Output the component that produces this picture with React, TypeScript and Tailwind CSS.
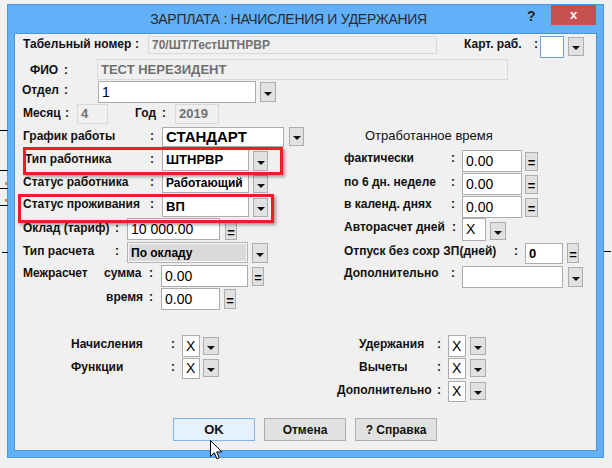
import React from 'react';

const Lbl = ({ children, className = '' }: { children?: React.ReactNode; className?: string }) => (
  <span className={`shrink-0 whitespace-nowrap text-[12px] leading-[14px] font-bold text-[#111] ${className}`}>{children}</span>
);

const Box = ({ children, className = '' }: { children?: React.ReactNode; className?: string }) => (
  <div className={`shrink-0 flex items-center pl-[3px] overflow-hidden whitespace-nowrap ${className}`}>{children}</div>
);

const Drop = ({ className = '' }: { className?: string }) => (
  <div className={`shrink-0 bg-[#e1e1e1] border border-[#adadad] flex items-center justify-center ${className}`}>
    <span className="mt-[3px] w-0 h-0 border-x-[4px] border-x-transparent border-t-[4px] border-t-[#111]" />
  </div>
);

const Eq = ({ className = '' }: { className?: string }) => (
  <div className={`shrink-0 bg-[#e1e1e1] border border-[#adadad] flex items-center justify-center pt-[2px] text-[13px] font-bold leading-none text-black ${className}`}>=</div>
);

const Row = ({ children, className = '' }: { children: React.ReactNode; className?: string }) => (
  <div className={`flex items-start shrink-0 ${className}`}>{children}</div>
);

const white = 'bg-white border border-[#acacac] text-black';
const gray = 'bg-[#f0f0f0] border border-[#d9d9d9] text-[#707070] font-bold';

export default function App() {
  return (
    <div className="relative w-[612px] h-[468px] overflow-hidden bg-[#f0f0f0] pt-[4px] pl-[7px] font-['Liberation_Sans',Arial,sans-serif]">
      {/* bits of the window behind */}
      <div className="absolute left-0 top-[130px] w-[8px] h-px bg-black" />
      <div className="absolute left-0 top-[170px] w-[8px] h-px bg-black" />
      <div className="absolute left-0 top-[188px] w-[8px] h-px bg-black" />
      <div className="absolute left-[5px] top-[182px] w-[2px] h-[3px] bg-[#e08a2a]" />
      <div className="absolute left-0 top-[205px] w-[8px] h-px bg-black" />
      <div className="absolute left-[5px] top-[199px] w-[2px] h-[3px] bg-[#e08a2a]" />
      <div className="absolute left-[2px] top-[252px] w-[6px] h-px bg-black" />
      <div className="absolute left-[604px] top-[251px] w-[7px] h-px bg-black" />

      <div className="w-[597px] h-[454px] border border-[#4f97dc] bg-[#62b0f8] flex flex-col">
        {/* title bar */}
        <div className="h-[28px] flex items-start shrink-0">
          <div className="flex-1 h-full flex items-center justify-center pl-[42px] text-[14px] tracking-[-0.3px] text-[#2b2b2b]">
            ЗАРПЛАТА : НАЧИСЛЕНИЯ И УДЕРЖАНИЯ
          </div>
          <div className="w-[24px] h-full flex items-center justify-start pb-[5px] text-[14px] font-bold text-[#222]">?</div>
          <div className="w-[45px] h-[20px] mr-[7px] bg-[#c75050] flex items-center justify-center text-white text-[13px] font-bold">x</div>
        </div>

        {/* client area */}
        <div className="relative mx-[6px] h-[418px] border border-[#4d94d6] bg-[#f0f0f0] flex flex-col">
          <Row className="h-[25px]">
            <Lbl className="ml-[8px] mt-[3px] w-[112px]">Табельный номер</Lbl>
            <Lbl className="mt-[3px] w-[13px]">:</Lbl>
            <Box className={`mt-[2px] w-[289px] h-[18px] text-[12px] ${gray}`}>70/ШТ/ТестШТНРВР</Box>
            <Lbl className="ml-[27px] mt-[3px] w-[70px]">Карт. раб.</Lbl>
            <Lbl className="mt-[3px] w-[6px]">:</Lbl>
            <Box className="mt-[2px] w-[24px] h-[22px] bg-white border border-[#6ea2dc]" />
            <Drop className="ml-[4px] mt-[3px] w-[16px] h-[19px]" />
          </Row>
          <Row className="h-[22px]">
            <Lbl className="ml-[15px] mt-[4px] w-[34px]">ФИО</Lbl>
            <Lbl className="mt-[4px] w-[33px]">:</Lbl>
            <Box className={`w-[411px] h-[21px] text-[13px] ${gray}`}>ТЕСТ НЕРЕЗИДЕНТ</Box>
          </Row>
          <Row className="h-[23px]">
            <Lbl className="ml-[7px] mt-[2px] w-[42px]">Отдел</Lbl>
            <Lbl className="mt-[2px] w-[34px]">:</Lbl>
            <Box className={`w-[158px] h-[22px] text-[14px] ${white}`}>1</Box>
            <Drop className="ml-[4px] mt-[1px] w-[16px] h-[20px]" />
          </Row>
          <Row className="h-[22px]">
            <Lbl className="ml-[8px] mt-[2px] w-[42px]">Месяц</Lbl>
            <Lbl className="mt-[2px] w-[12px]">:</Lbl>
            <Box className={`w-[31px] h-[20px] text-[13px] ${gray}`}>4</Box>
            <Lbl className="ml-[27px] mt-[2px] w-[27px]">Год</Lbl>
            <Lbl className="mt-[2px] w-[13px]">:</Lbl>
            <Box className={`w-[44px] h-[20px] text-[13px] ${gray}`}>2019</Box>
          </Row>

          {/* middle: settings and worked time */}
          <div className="flex shrink-0">
            <div className="w-[300px] flex flex-col">
              <Row className="h-[23px]">
                <Lbl className="ml-[8px] mt-[3px] w-[127px]">График работы</Lbl>
                <Lbl className="mt-[3px] w-[12px]">:</Lbl>
                <Box className={`mt-[1px] w-[122px] h-[20px] text-[15px] font-bold ${white}`}>СТАНДАРТ</Box>
                <Drop className="ml-[5px] mt-[1px] w-[15px] h-[19px]" />
              </Row>
              <Row className="h-[23px]">
                <Lbl className="ml-[10px] mt-[3px] w-[125px]">Тип работника</Lbl>
                <Lbl className="mt-[3px] w-[12px]">:</Lbl>
                <Box className={`w-[87px] h-[22px] text-[13px] font-bold ${white}`}>ШТНРВР</Box>
                <Drop className="ml-[4px] mt-[2px] w-[15px] h-[20px]" />
              </Row>
              <Row className="h-[23px]">
                <Lbl className="ml-[8px] mt-[3px] w-[127px]">Статус работника</Lbl>
                <Lbl className="mt-[3px] w-[12px]">:</Lbl>
                <Box className={`mt-[1px] w-[87px] h-[20px] text-[12px] font-bold ${white}`}>Работающий</Box>
                <Drop className="ml-[4px] mt-[3px] w-[15px] h-[18px]" />
              </Row>
              <Row className="h-[22px]">
                <Lbl className="ml-[8px] mt-[2px] w-[127px]">Статус проживания</Lbl>
                <Lbl className="mt-[2px] w-[12px]">:</Lbl>
                <Box className={`mt-[1px] w-[87px] h-[21px] text-[13px] font-bold ${white}`}>ВП</Box>
                <Drop className="ml-[4px] mt-[3px] w-[15px] h-[19px]" />
              </Row>
              <Row className="h-[24px]">
                <Lbl className="ml-[8px] mt-[4px] w-[92px]">Оклад (тариф)</Lbl>
                <Lbl className="mt-[4px] w-[12px]">:</Lbl>
                <Box className={`mt-[1px] w-[93px] h-[22px] text-[14px] ${white}`}>10 000.00</Box>
                <Eq className="ml-[5px] mt-[5px] w-[12px] h-[18px]" />
              </Row>
              <Row className="h-[23px]">
                <Lbl className="ml-[8px] mt-[3px] w-[92px]">Тип расчета</Lbl>
                <Lbl className="mt-[3px] w-[12px]">:</Lbl>
                <Box className="mt-[1px] w-[121px] h-[21px] text-[12px] font-bold text-black bg-[#dadada] border border-[#b4b4b4] shadow-[inset_0_0_0_1px_#f6f6f6]">По окладу</Box>
                <Drop className="ml-[4px] mt-[2px] w-[16px] h-[20px]" />
              </Row>
              <Row className="h-[23px]">
                <Lbl className="ml-[8px] mt-[2px] w-[81px]">Межрасчет</Lbl>
                <Lbl className="mt-[2px] w-[45px]">сумма</Lbl>
                <Lbl className="mt-[2px] w-[12px]">:</Lbl>
                <Box className={`mt-[1px] w-[87px] h-[22px] text-[14px] ${white}`}>0.00</Box>
                <Eq className="ml-[4px] mt-[3px] w-[12px] h-[19px]" />
              </Row>
              <Row className="h-[24px]">
                <Lbl className="ml-[91px] mt-[3px] w-[43px]">время</Lbl>
                <Lbl className="mt-[3px] w-[12px]">:</Lbl>
                <Box className={`mt-[1px] w-[59px] h-[22px] text-[14px] ${white}`}>0.00</Box>
                <Eq className="ml-[4px] mt-[2px] w-[12px] h-[20px]" />
              </Row>
            </div>

            <div className="flex-1 flex flex-col">
              <Row className="h-[23px]">
                <span className="ml-[50px] mt-[2px] text-[13px] leading-[15px] text-[#111] whitespace-nowrap">Отработанное время</span>
              </Row>
              <Row className="h-[23px]">
                <Lbl className="ml-[29px] mt-[2px] w-[107px]">фактически</Lbl>
                <Lbl className="mt-[2px] w-[11px]">:</Lbl>
                <Box className={`mt-[1px] w-[60px] h-[22px] text-[14px] ${white}`}>0.00</Box>
                <Eq className="ml-[3px] mt-[3px] w-[13px] h-[19px]" />
              </Row>
              <Row className="h-[23px]">
                <Lbl className="ml-[29px] mt-[3px] w-[107px]">по 6 дн. неделе</Lbl>
                <Lbl className="mt-[3px] w-[11px]">:</Lbl>
                <Box className={`mt-[1px] w-[60px] h-[22px] text-[14px] ${white}`}>0.00</Box>
                <Eq className="ml-[3px] mt-[3px] w-[13px] h-[19px]" />
              </Row>
              <Row className="h-[23px]">
                <Lbl className="ml-[29px] mt-[2px] w-[107px]">в календ. днях</Lbl>
                <Lbl className="mt-[2px] w-[11px]">:</Lbl>
                <Box className={`mt-[1px] w-[60px] h-[22px] text-[14px] ${white}`}>0.00</Box>
                <Eq className="ml-[3px] mt-[3px] w-[13px] h-[19px]" />
              </Row>
              <Row className="h-[24px]">
                <Lbl className="ml-[29px] mt-[2px] w-[108px]">Авторасчет дней</Lbl>
                <Lbl className="mt-[2px] w-[10px]">:</Lbl>
                <Box className={`w-[24px] h-[23px] text-[14px] ${white}`}>X</Box>
                <Drop className="ml-[4px] mt-[4px] w-[16px] h-[18px]" />
              </Row>
              <Row className="h-[23px]">
                <Lbl className="ml-[29px] mt-[2px] w-[170px]">Отпуск без сохр ЗП(дней)</Lbl>
                <Lbl className="mt-[2px] w-[11px]">:</Lbl>
                <Box className={`mt-[1px] w-[38px] h-[21px] text-[13px] font-bold ${white}`}>0</Box>
                <Eq className="ml-[4px] mt-[1px] w-[12px] h-[20px]" />
              </Row>
              <Row className="h-[24px]">
                <Lbl className="ml-[29px] mt-[1px] w-[107px]">Дополнительно</Lbl>
                <Lbl className="mt-[1px] w-[11px]">:</Lbl>
                <Box className={`mt-[1px] w-[101px] h-[22px] ${white}`} />
                <Drop className="ml-[5px] mt-[2px] w-[15px] h-[20px]" />
              </Row>
            </div>
          </div>

          {/* bottom: lists */}
          <div className="flex shrink-0 mt-[23px]">
            <div className="w-[300px] flex flex-col">
              <Row className="h-[23px]">
                <Lbl className="ml-[56px] mt-[3px] w-[100px]">Начисления</Lbl>
                <Lbl className="mt-[3px] w-[11px]">:</Lbl>
                <Box className={`mt-[1px] w-[18px] h-[22px] text-[14px] pl-[2px] ${white}`}>X</Box>
                <Drop className="ml-[3px] mt-[3px] w-[16px] h-[18px]" />
              </Row>
              <Row className="h-[23px]">
                <Lbl className="ml-[56px] mt-[3px] w-[100px]">Функции</Lbl>
                <Lbl className="mt-[3px] w-[11px]">:</Lbl>
                <Box className={`mt-[1px] w-[18px] h-[21px] text-[14px] pl-[2px] ${white}`}>X</Box>
                <Drop className="ml-[3px] mt-[2px] w-[16px] h-[18px]" />
              </Row>
            </div>
            <div className="flex-1 flex flex-col">
              <Row className="h-[23px]">
                <Lbl className="ml-[44px] mt-[3px] w-[78px]">Удержания</Lbl>
                <Lbl className="mt-[3px] w-[11px]">:</Lbl>
                <Box className={`mt-[1px] w-[18px] h-[22px] text-[14px] pl-[2px] ${white}`}>X</Box>
                <Drop className="ml-[4px] mt-[3px] w-[16px] h-[18px]" />
              </Row>
              <Row className="h-[23px]">
                <Lbl className="ml-[44px] mt-[3px] w-[78px]">Вычеты</Lbl>
                <Lbl className="mt-[3px] w-[11px]">:</Lbl>
                <Box className={`mt-[1px] w-[18px] h-[21px] text-[14px] pl-[2px] ${white}`}>X</Box>
                <Drop className="ml-[4px] mt-[2px] w-[16px] h-[18px]" />
              </Row>
              <Row className="h-[23px]">
                <Lbl className="ml-[22px] mt-[3px] w-[100px]">Дополнительно</Lbl>
                <Lbl className="mt-[3px] w-[11px]">:</Lbl>
                <Box className={`mt-[1px] w-[18px] h-[21px] text-[14px] pl-[2px] ${white}`}>X</Box>
                <Drop className="ml-[4px] mt-[2px] w-[16px] h-[18px]" />
              </Row>
            </div>
          </div>

          {/* buttons */}
          <div className="flex shrink-0 mt-[15px]">
            <button className="ml-[158px] w-[82px] h-[23px] bg-[#e5f1fb] border border-[#7eb4ea] text-[13px] font-bold text-[#111] flex items-center justify-center">OK</button>
            <button className="ml-[9px] w-[82px] h-[23px] bg-[#e1e1e1] border border-[#adadad] text-[12px] font-bold text-[#111] flex items-center justify-center">Отмена</button>
            <button className="ml-[9px] w-[82px] h-[23px] bg-[#e1e1e1] border border-[#adadad] text-[12px] font-bold text-[#111] flex items-center justify-center">? Справка</button>
          </div>

          {/* red highlight frames drawn over the form */}
          <div className="absolute left-[8px] top-[113px] w-[260px] h-[28px] border-[3px] border-[#ee1c24] shadow-[2px_2px_3px_rgba(0,0,0,0.35)]" />
          <div className="absolute left-[3px] top-[160px] w-[256px] h-[29px] border-[3px] border-[#ee1c24] shadow-[2px_2px_3px_rgba(0,0,0,0.35)]" />
        </div>
      </div>

      {/* mouse pointer */}
      <svg className="absolute left-[210px] top-[440px]" width="13" height="20" viewBox="0 0 13 20">
        <path d="M0.5 0.5 L0.5 16.5 L4.3 12.8 L6.9 18.8 L9.2 17.8 L6.7 11.9 L11.8 11.9 Z" fill="white" stroke="black" strokeWidth="1" strokeLinejoin="miter" />
      </svg>
    </div>
  );
}
